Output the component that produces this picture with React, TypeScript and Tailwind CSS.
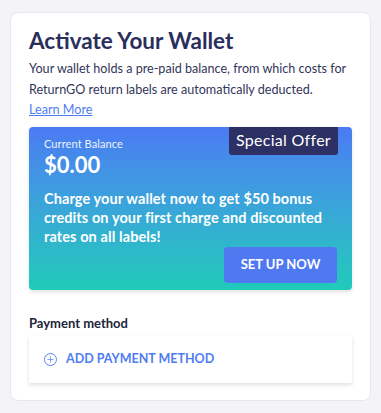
import { Plus } from 'lucide-react';

export default function App() {
  return (
    <div className="min-h-[413px] bg-[#f4f4f6] px-[10px] pt-[12px] pb-[13px] font-['Lato',sans-serif]">
      <div className="rounded-lg border border-[#e6e8f0] bg-white px-[18px] pt-[12px] pb-[17px]">
        <h1 className="text-[22.5px] font-bold leading-[32px] text-[#2a2e5c]">
          Activate Your Wallet
        </h1>
        <p className="mt-[1px] text-[12.6px] leading-[21px] text-[#33365a]">
          Your wallet holds a pre-paid balance, from which costs for
          <br />
          ReturnGO return labels are automatically deducted.
        </p>
        <a href="#" className="block text-[12.6px] leading-[20px] text-[#4f7cf3] underline">
          Learn More
        </a>

        {/* Offer banner */}
        <div className="relative mt-[7px] rounded-[4px] bg-gradient-to-b from-[#4b7af3] to-[#1fcbb8] px-[15px] pt-[10px] pb-[7px] shadow-[0_2px_4px_rgba(0,0,0,0.12)]">
          <span className="absolute right-[14px] top-0 rounded-b-[3px] bg-[#2c3064] px-[7px] pt-[3px] pb-[5px] text-[16px] leading-[20px] tracking-[0.3px] text-white">
            Special Offer
          </span>
          <div className="text-[11px] leading-[14px] tracking-[0.1px] text-white/90">Current Balance</div>
          <div className="mt-[1px] text-[22px] font-bold leading-[26px] text-white">$0.00</div>
          <p className="mt-[11px] text-[14.5px] font-bold leading-[19px] tracking-[0.1px] text-white">
            Charge your wallet now to get $50 bonus credits on your first charge and discounted rates on all labels!
          </p>
          <div className="mt-[1px] flex justify-end">
            <button className="h-[36px] w-[113px] rounded-[4px] bg-[#4f78f1] text-[13px] font-bold text-white">
              SET UP NOW
            </button>
          </div>
        </div>

        <div className="mt-[24px] text-[13px] font-bold leading-[18px] text-[#22243a]">Payment method</div>
        <div className="mt-[4px] flex h-[47px] items-center gap-[9px] bg-white px-[15px] shadow-[0_2px_4px_rgba(0,0,0,0.12)]">
          <span className="flex h-[13px] w-[13px] items-center justify-center rounded-full border border-[#5a84f2]">
            <Plus size={9} strokeWidth={2} className="text-[#5a84f2]" />
          </span>
          <span className="text-[12.5px] font-bold text-[#4f7cf3]">ADD PAYMENT METHOD</span>
        </div>
      </div>
    </div>
  );
}
